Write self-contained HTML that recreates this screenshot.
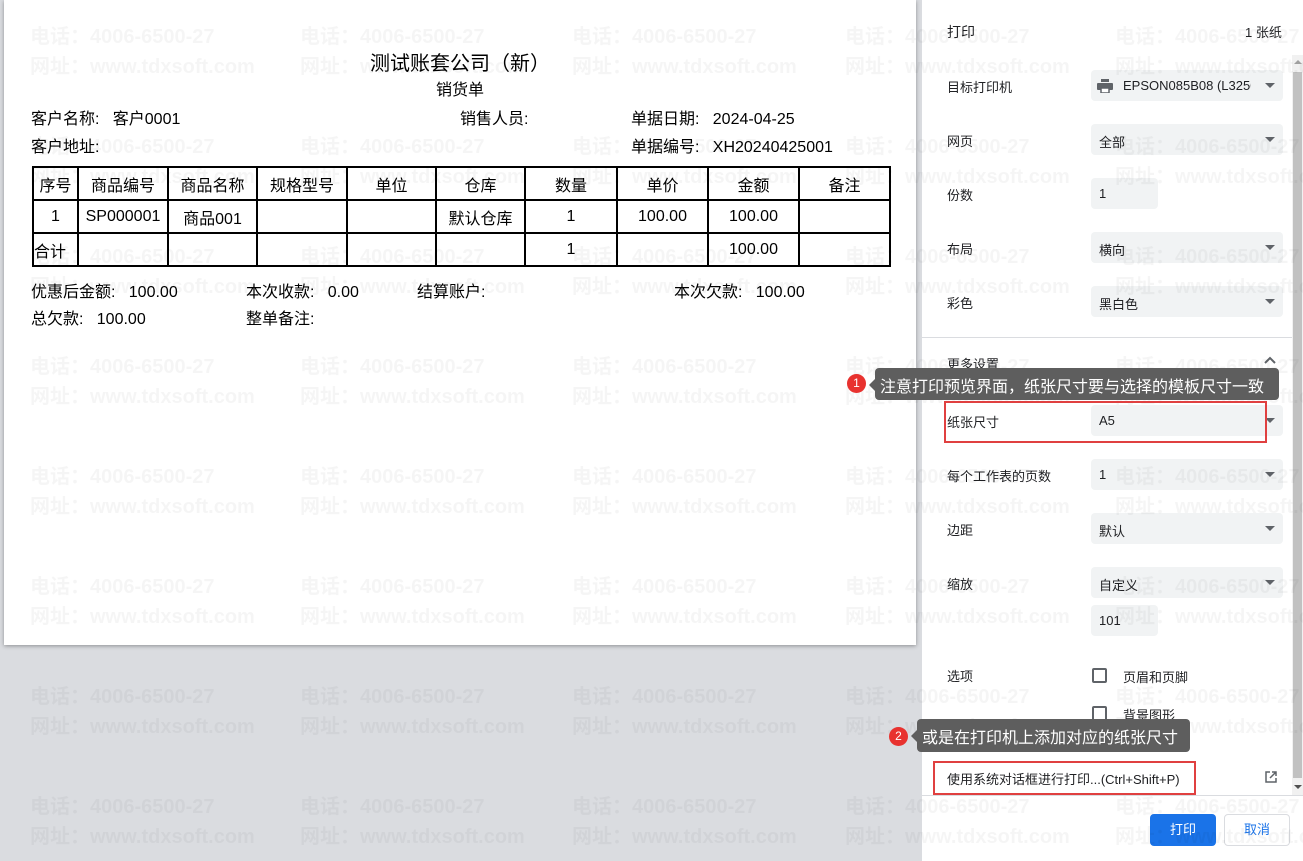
<!DOCTYPE html>
<html><head><meta charset="utf-8"><style>
*{margin:0;padding:0;box-sizing:border-box}
body{width:1303px;height:861px;overflow:hidden;position:relative;background:#dadce0;font-family:"Liberation Sans","Noto Sans CJK SC",sans-serif;color:#000}
.a{position:absolute;white-space:nowrap}
#paper{position:absolute;left:4px;top:0;width:912px;height:645px;background:#fff;box-shadow:0 1px 4px rgba(0,0,0,.35)}
.p{font-size:16px;color:#000}
table{position:absolute;left:32px;top:166px;width:857px;table-layout:fixed;border-collapse:collapse;font-size:16px}
td{border:2px solid #000;height:33px;text-align:center;padding:0;white-space:nowrap;overflow:hidden}
#panel{position:absolute;left:922px;top:0;width:381px;height:861px;background:#fff}
.l{font-size:13px;color:#202124}
.sel{position:absolute;left:1091px;width:192px;height:31px;background:#f1f3f4;border-radius:4px;font-size:13px;color:#202124;padding:8px 0 0 8px;overflow:hidden;white-space:nowrap}
.sel:after{content:"";position:absolute;right:8px;top:13px;border-left:5px solid transparent;border-right:5px solid transparent;border-top:5px solid #5f6368}
.wm{position:absolute;font-size:20px;font-weight:bold;color:rgba(0,0,0,.04);white-space:nowrap;pointer-events:none;z-index:5}
.cb{position:absolute;left:1092px;width:15px;height:15px;border:2px solid #5f6368;border-radius:2px}
.tip{position:absolute;background:#5e5e5e;color:#fff;font-size:16px;border-radius:4px;z-index:10;padding:5px 5px 0 5px;white-space:nowrap}
.tip:before{content:"";position:absolute;left:-6px;top:11px;border-top:6px solid transparent;border-bottom:6px solid transparent;border-right:6px solid #5e5e5e}
.num{position:absolute;width:19px;height:19px;border-radius:50%;background:#e8322f;color:#fff;font-size:12px;text-align:center;line-height:19px;z-index:10}
.red{position:absolute;border:2px solid #e04040;z-index:9}
.nod:after{display:none}
</style></head><body>
<div id="paper">
<div class="a" style="left:0;width:912px;top:47px;text-align:center;font-size:20px">测试账套公司（新）</div>
<div class="a" style="left:0;width:912px;top:76px;text-align:center;font-size:16px">销货单</div>
<div class="a p" style="left:27px;top:105px">客户名称:&nbsp;&nbsp;&nbsp;客户0001</div>
<div class="a p" style="left:27px;top:133px">客户地址:</div>
<div class="a p" style="left:456px;top:105px">销售人员:</div>
<div class="a p" style="left:627px;top:105px">单据日期:&nbsp;&nbsp;&nbsp;2024-04-25</div>
<div class="a p" style="left:627px;top:133px">单据编号:&nbsp;&nbsp;&nbsp;XH20240425001</div>
<div class="a p" style="left:27px;top:278px">优惠后金额:&nbsp;&nbsp;&nbsp;100.00</div>
<div class="a p" style="left:242px;top:278px">本次收款:&nbsp;&nbsp;&nbsp;0.00</div>
<div class="a p" style="left:413px;top:278px">结算账户:</div>
<div class="a p" style="left:670px;top:278px">本次欠款:&nbsp;&nbsp;&nbsp;100.00</div>
<div class="a p" style="left:27px;top:305px">总欠款:&nbsp;&nbsp;&nbsp;100.00</div>
<div class="a p" style="left:242px;top:305px">整单备注:</div>
</div>
<table>
<colgroup><col style="width:45px"><col style="width:90px"><col style="width:89px"><col style="width:90px"><col style="width:89px"><col style="width:89px"><col style="width:92px"><col style="width:91px"><col style="width:91px"><col style="width:91px"></colgroup>
<tr><td>序号</td><td>商品编号</td><td>商品名称</td><td>规格型号</td><td>单位</td><td>仓库</td><td>数量</td><td>单价</td><td>金额</td><td>备注</td></tr>
<tr><td>1</td><td>SP000001</td><td>商品001</td><td></td><td></td><td>默认仓库</td><td>1</td><td>100.00</td><td>100.00</td><td></td></tr>
<tr><td style="text-align:left;height:32px">合计</td><td></td><td></td><td></td><td></td><td></td><td>1</td><td></td><td>100.00</td><td></td></tr>
</table>
<div id="panel"></div>
<div class="a l" style="left:947px;top:22px;font-size:14px">打印</div>
<div class="a l" style="left:1245px;top:22px">1 张纸</div>
<div class="a l" style="left:947px;top:77px">目标打印机</div>
<div class="sel" style="top:70px;padding-left:32px"><div style="width:128px;overflow:hidden;white-space:nowrap">EPSON085B08 (L3250</div><svg style="position:absolute;left:6px;top:9px" width="16" height="14" viewBox="0 0 16 14"><rect x="4" y="0" width="8" height="3" fill="#5f6368"/><rect x="0" y="4" width="16" height="7" rx="1" fill="#5f6368"/><rect x="4" y="9" width="8" height="5" fill="#fff" stroke="#5f6368" stroke-width="1.5"/></svg></div>
<div class="a l" style="left:947px;top:131px">网页</div>
<div class="sel" style="top:124px">全部</div>
<div class="a l" style="left:947px;top:185px">份数</div>
<div class="sel nod" style="top:178px;width:67px">1</div>
<div class="a l" style="left:947px;top:239px">布局</div>
<div class="sel" style="top:232px">横向</div>
<div class="a l" style="left:947px;top:293px">彩色</div>
<div class="sel" style="top:286px">黑白色</div>
<div class="a" style="left:922px;top:337px;width:371px;height:1px;background:#dadce0"></div>
<div class="a l" style="left:947px;top:354px">更多设置</div>
<svg class="a" style="left:1264px;top:356px" width="12" height="8"><path d="M1 7L6 2L11 7" stroke="#5f6368" stroke-width="2" fill="none"/></svg>
<div class="a l" style="left:947px;top:412px">纸张尺寸</div>
<div class="sel" style="top:405px">A5</div>
<div class="a l" style="left:947px;top:466px">每个工作表的页数</div>
<div class="sel" style="top:459px">1</div>
<div class="a l" style="left:947px;top:520px">边距</div>
<div class="sel" style="top:513px">默认</div>
<div class="a l" style="left:947px;top:574px">缩放</div>
<div class="sel" style="top:567px">自定义</div>
<div class="sel nod" style="top:605px;width:67px">101</div>
<div class="a l" style="left:947px;top:666px">选项</div>
<div class="cb" style="top:668px"></div><div class="a l" style="left:1123px;top:667px">页眉和页脚</div>
<div class="cb" style="top:706px"></div><div class="a l" style="left:1123px;top:705px">背景图形</div>
<div class="a l" style="left:947px;top:769px">使用系统对话框进行打印...(Ctrl+Shift+P)</div>
<svg class="a" style="left:1265px;top:771px" width="12" height="12"><path d="M5 1H1V11H11V7M7 1H11V5M11 1L5 7" stroke="#5f6368" stroke-width="1.5" fill="none"/></svg>
<div class="a" style="left:922px;top:795px;width:381px;height:1px;background:#dadce0"></div>
<div class="a" style="left:1292px;top:55px;width:11px;height:740px;background:#f1f1f1"></div>
<div class="a" style="left:1293px;top:72px;width:9px;height:706px;background:#c1c1c1"></div>
<div class="a" style="left:1294px;top:60px;border-left:4px solid transparent;border-right:4px solid transparent;border-bottom:4px solid #a0a0a0"></div>
<div class="a" style="left:1294px;top:785px;border-left:4px solid transparent;border-right:4px solid transparent;border-top:4px solid #505050"></div>
<div class="a" style="left:1150px;top:814px;width:66px;height:32px;background:#1a73e8;border-radius:4px;color:#fff;font-size:13px;text-align:center;line-height:32px">打印</div>
<div class="a" style="left:1224px;top:814px;width:66px;height:32px;border:1px solid #dadce0;border-radius:4px;color:#1a73e8;font-size:13px;text-align:center;line-height:30px">取消</div>

<div class="wm" style="left:30px;top:20px">电话：4006-6500-27</div><div class="wm" style="left:30px;top:50px">网址：www.tdxsoft.com</div>
<div class="wm" style="left:300px;top:20px">电话：4006-6500-27</div><div class="wm" style="left:300px;top:50px">网址：www.tdxsoft.com</div>
<div class="wm" style="left:572px;top:20px">电话：4006-6500-27</div><div class="wm" style="left:572px;top:50px">网址：www.tdxsoft.com</div>
<div class="wm" style="left:845px;top:20px">电话：4006-6500-27</div><div class="wm" style="left:845px;top:50px">网址：www.tdxsoft.com</div>
<div class="wm" style="left:1115px;top:20px">电话：4006-6500-27</div><div class="wm" style="left:1115px;top:50px">网址：www.tdxsoft.com</div>
<div class="wm" style="left:30px;top:130px">电话：4006-6500-27</div><div class="wm" style="left:30px;top:160px">网址：www.tdxsoft.com</div>
<div class="wm" style="left:300px;top:130px">电话：4006-6500-27</div><div class="wm" style="left:300px;top:160px">网址：www.tdxsoft.com</div>
<div class="wm" style="left:572px;top:130px">电话：4006-6500-27</div><div class="wm" style="left:572px;top:160px">网址：www.tdxsoft.com</div>
<div class="wm" style="left:845px;top:130px">电话：4006-6500-27</div><div class="wm" style="left:845px;top:160px">网址：www.tdxsoft.com</div>
<div class="wm" style="left:1115px;top:130px">电话：4006-6500-27</div><div class="wm" style="left:1115px;top:160px">网址：www.tdxsoft.com</div>
<div class="wm" style="left:30px;top:240px">电话：4006-6500-27</div><div class="wm" style="left:30px;top:270px">网址：www.tdxsoft.com</div>
<div class="wm" style="left:300px;top:240px">电话：4006-6500-27</div><div class="wm" style="left:300px;top:270px">网址：www.tdxsoft.com</div>
<div class="wm" style="left:572px;top:240px">电话：4006-6500-27</div><div class="wm" style="left:572px;top:270px">网址：www.tdxsoft.com</div>
<div class="wm" style="left:845px;top:240px">电话：4006-6500-27</div><div class="wm" style="left:845px;top:270px">网址：www.tdxsoft.com</div>
<div class="wm" style="left:1115px;top:240px">电话：4006-6500-27</div><div class="wm" style="left:1115px;top:270px">网址：www.tdxsoft.com</div>
<div class="wm" style="left:30px;top:350px">电话：4006-6500-27</div><div class="wm" style="left:30px;top:380px">网址：www.tdxsoft.com</div>
<div class="wm" style="left:300px;top:350px">电话：4006-6500-27</div><div class="wm" style="left:300px;top:380px">网址：www.tdxsoft.com</div>
<div class="wm" style="left:572px;top:350px">电话：4006-6500-27</div><div class="wm" style="left:572px;top:380px">网址：www.tdxsoft.com</div>
<div class="wm" style="left:845px;top:350px">电话：4006-6500-27</div><div class="wm" style="left:845px;top:380px">网址：www.tdxsoft.com</div>
<div class="wm" style="left:1115px;top:350px">电话：4006-6500-27</div><div class="wm" style="left:1115px;top:380px">网址：www.tdxsoft.com</div>
<div class="wm" style="left:30px;top:460px">电话：4006-6500-27</div><div class="wm" style="left:30px;top:490px">网址：www.tdxsoft.com</div>
<div class="wm" style="left:300px;top:460px">电话：4006-6500-27</div><div class="wm" style="left:300px;top:490px">网址：www.tdxsoft.com</div>
<div class="wm" style="left:572px;top:460px">电话：4006-6500-27</div><div class="wm" style="left:572px;top:490px">网址：www.tdxsoft.com</div>
<div class="wm" style="left:845px;top:460px">电话：4006-6500-27</div><div class="wm" style="left:845px;top:490px">网址：www.tdxsoft.com</div>
<div class="wm" style="left:1115px;top:460px">电话：4006-6500-27</div><div class="wm" style="left:1115px;top:490px">网址：www.tdxsoft.com</div>
<div class="wm" style="left:30px;top:570px">电话：4006-6500-27</div><div class="wm" style="left:30px;top:600px">网址：www.tdxsoft.com</div>
<div class="wm" style="left:300px;top:570px">电话：4006-6500-27</div><div class="wm" style="left:300px;top:600px">网址：www.tdxsoft.com</div>
<div class="wm" style="left:572px;top:570px">电话：4006-6500-27</div><div class="wm" style="left:572px;top:600px">网址：www.tdxsoft.com</div>
<div class="wm" style="left:845px;top:570px">电话：4006-6500-27</div><div class="wm" style="left:845px;top:600px">网址：www.tdxsoft.com</div>
<div class="wm" style="left:1115px;top:570px">电话：4006-6500-27</div><div class="wm" style="left:1115px;top:600px">网址：www.tdxsoft.com</div>
<div class="wm" style="left:30px;top:680px">电话：4006-6500-27</div><div class="wm" style="left:30px;top:710px">网址：www.tdxsoft.com</div>
<div class="wm" style="left:300px;top:680px">电话：4006-6500-27</div><div class="wm" style="left:300px;top:710px">网址：www.tdxsoft.com</div>
<div class="wm" style="left:572px;top:680px">电话：4006-6500-27</div><div class="wm" style="left:572px;top:710px">网址：www.tdxsoft.com</div>
<div class="wm" style="left:845px;top:680px">电话：4006-6500-27</div><div class="wm" style="left:845px;top:710px">网址：www.tdxsoft.com</div>
<div class="wm" style="left:1115px;top:680px">电话：4006-6500-27</div><div class="wm" style="left:1115px;top:710px">网址：www.tdxsoft.com</div>
<div class="wm" style="left:30px;top:790px">电话：4006-6500-27</div><div class="wm" style="left:30px;top:820px">网址：www.tdxsoft.com</div>
<div class="wm" style="left:300px;top:790px">电话：4006-6500-27</div><div class="wm" style="left:300px;top:820px">网址：www.tdxsoft.com</div>
<div class="wm" style="left:572px;top:790px">电话：4006-6500-27</div><div class="wm" style="left:572px;top:820px">网址：www.tdxsoft.com</div>
<div class="wm" style="left:845px;top:790px">电话：4006-6500-27</div><div class="wm" style="left:845px;top:820px">网址：www.tdxsoft.com</div>
<div class="wm" style="left:1115px;top:790px">电话：4006-6500-27</div><div class="wm" style="left:1115px;top:820px">网址：www.tdxsoft.com</div>

<div class="num" style="left:847px;top:374px">1</div>
<div class="tip" style="left:875px;top:368px;width:404px;height:32px">注意打印预览界面，纸张尺寸要与选择的模板尺寸一致</div>
<div class="red" style="left:944px;top:401px;width:323px;height:42px"></div>
<div class="num" style="left:889px;top:727px">2</div>
<div class="tip" style="left:917px;top:719px;width:273px;height:33px">或是在打印机上添加对应的纸张尺寸</div>
<div class="red" style="left:933px;top:761px;width:263px;height:34px"></div>
</body></html>
